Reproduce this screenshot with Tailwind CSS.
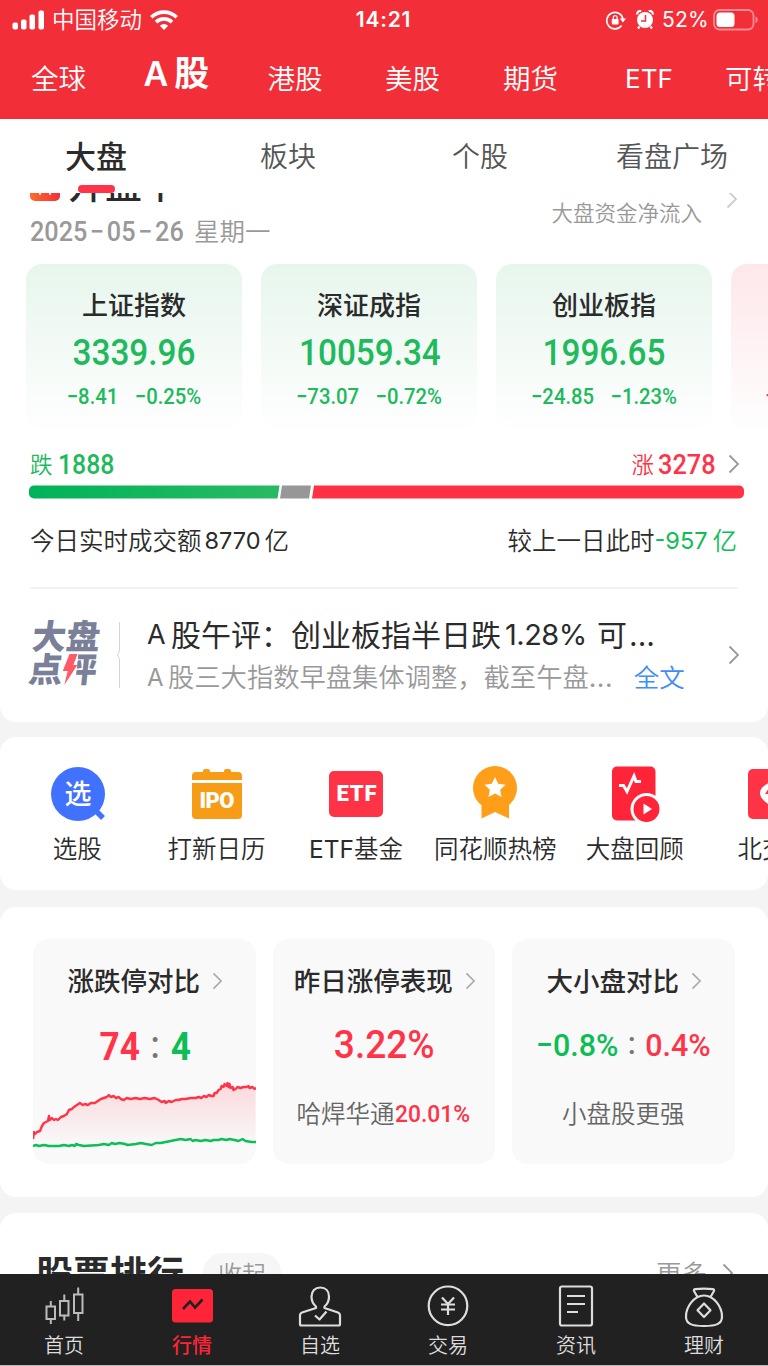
<!DOCTYPE html>
<html lang="zh-CN">
<head>
  <meta charset="UTF-8">
  <meta name="viewport" content="width=device-width, initial-scale=1.0">
  <title>A股行情</title>
  <script src="https://cdn.jsdelivr.net/npm/@tailwindcss/browser@4"></script>
</head>
<body class="w-[768px] h-[1366px] flex flex-col overflow-hidden bg-[#f4f4f4] text-[#2b2b2b] whitespace-nowrap font-['Inter','Noto_Sans_CJK_SC',sans-serif]">

  <svg class="hidden">
    <symbol id="chevron" viewBox="0 0 12 20"><path d="M1.5 1.5 10 10l-8.5 8.5" fill="none" stroke="currentColor" stroke-width="1.8"/></symbol>
  </svg>

  <!-- Header -->
  <header class="h-[119px] shrink-0 overflow-hidden bg-[#f22f38] text-white">
    <div class="h-10 grid grid-cols-3 items-center pl-3 pr-[9px]">
      <div class="flex items-center">
        <svg class="w-8 h-5" viewBox="0 0 32 20" fill="#fff">
          <rect x="0.5" y="12.5" width="5.5" height="7" rx="1.8"/>
          <rect x="9" y="9.5" width="5.5" height="10" rx="1.8"/>
          <rect x="17.5" y="4.5" width="5.5" height="15" rx="1.8"/>
          <rect x="26.5" y="0.5" width="5.5" height="19" rx="1.8"/>
        </svg>
        <span class="ml-2 text-[22.5px] leading-8 font-[350]">中国移动</span>
        <svg class="ml-2 w-7 h-5" viewBox="0 0 28 20" fill="none" stroke="#fff" stroke-width="3.6">
          <path d="M1.3 7.3a18.2 18.2 0 0 1 25.4 0"/>
          <path d="M6 12.1a11.5 11.5 0 0 1 16 0"/>
          <path d="M14 20l-4.2-4.3a6 6 0 0 1 8.4 0z" fill="#fff" stroke="none"/>
        </svg>
      </div>
      <div class="-ml-1 text-center text-[21px] leading-8 font-semibold tracking-[0.8px]">14:21</div>
      <div class="flex items-center justify-end">
        <svg class="w-5 h-5" viewBox="0 0 20 20" fill="none" stroke="#fff" stroke-width="1.6">
          <path d="M15.6 15.5A8.2 8.2 0 1 1 17 9"/>
          <path d="M13.8 8.5h6.2l-3.1 4z" fill="#fff" stroke="none"/>
          <rect x="5.8" y="9" width="6.8" height="5.4" rx=".8" fill="#fff" stroke="none"/>
          <path d="M7.3 9.5V7.600a1.900 1.900 0 0 1 3.800 0v1.900" stroke-width="1.2"/>
        </svg>
        <svg class="ml-2.5 w-[18px] h-5" viewBox="0 0 18 20">
          <circle cx="9" cy="10" r="8" fill="#fff"/>
          <path d="M1.200 4.500a3 3 0 0 1 4-3.300M16.800 4.500a3 3 0 0 0-4-3.300M3.500 16.500l-1.500 2M14.500 16.500l1.500 2" fill="none" stroke="#fff" stroke-width="2.2"/>
          <path d="M9.500 5v6H5" fill="none" stroke="#f22f38" stroke-width="1.5"/>
        </svg>
        <span class="ml-2 w-[47px] text-[21px] leading-8 tracking-[0.2px]">52%</span>
        <svg class="ml-1 w-[46px] h-[22px]" viewBox="0 0 46 22">
          <rect x="1" y="1" width="39.5" height="19.5" rx="5.5" fill="none" stroke="#fff" stroke-opacity=".45" stroke-width="1.8"/>
          <rect x="3.5" y="3.5" width="18" height="14.5" rx="3.5" fill="#fff"/>
          <path d="M42.5 7.500c3 1 3 5.500 0 6.500z" fill="#fff" fill-opacity=".45"/>
        </svg>
      </div>
    </div>
    <nav class="flex pt-[19px] text-[27.5px] leading-10 font-[350] text-center">
      <a class="w-[117px] shrink-0">全球</a>
      <a class="w-[119px] shrink-0 -mt-[6px] text-[35px] font-semibold"><span class="text-[34px]">A</span><span class="ml-1.5">股</span></a>
      <a class="w-[118px] shrink-0">港股</a>
      <a class="w-[117px] shrink-0">美股</a>
      <a class="w-[119px] shrink-0">期货</a>
      <a class="w-[118px] shrink-0 text-[26px] font-normal">ETF</a>
      <a class="w-[60px] shrink-0 overflow-hidden pl-[17px] text-left">可转债</a>
    </nav>
  </header>

  <!-- Sub tabs -->
  <nav class="h-[74px] shrink-0 grid grid-cols-4 bg-white pt-[18px] text-center text-[28px] leading-10 font-[350] text-[#555]">
    <a class="flex flex-col items-center text-[31px] font-medium text-[#2b2b2b]">大盘<span class="mt-[8px] w-[37px] h-2 rounded-full bg-[#ff3448]"></span></a>
    <a>板块</a>
    <a>个股</a>
    <a>看盘广场</a>
  </nav>

  <main class="h-[1081px] shrink-0 overflow-hidden">
    <!-- Market overview -->
    <section class="h-[529px] overflow-hidden bg-white rounded-b-2xl">
      <div class="-mt-7 h-20 flex justify-between pl-[30px] pr-[30px]">
        <div>
          <div class="flex h-10 pt-px text-[37px] leading-10 font-medium">
            <svg class="mt-[5px] w-[30px] h-[30px]" viewBox="0 0 30 30">
              <defs><linearGradient id="flame" x1="0" x2="1"><stop stop-color="#ff6a2b"/><stop offset="1" stop-color="#f22f38"/></linearGradient></defs>
              <rect width="30" height="30" rx="5" fill="url(#flame)"/>
              <path d="M10 12v12M20 12v12" stroke="#fff" stroke-width="1.5"/>
            </svg>
            <span class="ml-[8px]">开盘中</span>
          </div>
          <div class="mt-3 flex h-7 leading-7 text-[#999]">
            <span class="flex w-[164px] origin-left text-[28px] leading-[30px] font-medium font-['Roboto'] scale-x-[.9]">2025<span class="mx-[3px]">−</span>05<span class="mx-[3px]">−</span>26</span>
            <span class="text-[25.5px] leading-[30px] font-[350]">星期一</span>
          </div>
        </div>
        <div class="flex text-[#999]">
          <span class="pt-[34px] text-[21.5px] leading-7 font-[350]">大盘资金净流入</span>
          <svg class="ml-6 mt-[24px] w-3 h-5 text-[#ccc]"><use href="#chevron"/></svg>
        </div>
      </div>

      <div class="mt-[19px] pl-[26px] flex gap-[19px] overflow-hidden text-center text-[#20ba5d] font-['Roboto','Noto_Sans_CJK_SC',sans-serif]">
        <div class="w-[216px] h-[165px] shrink-0 rounded-2xl bg-linear-to-b from-[#e7f6ed] to-[#fefefe] pt-[26px]">
          <h3 class="text-[26px] leading-8 font-medium text-[#2b2b2b]">上证指数</h3>
          <p class="mt-[11px] text-[37px] leading-10 font-medium scale-x-90">3339.96</p>
          <p class="mt-3 flex justify-center gap-[18px] text-[22px] leading-6 font-medium scale-x-[.92]"><span>−8.41</span><span>−0.25%</span></p>
        </div>
        <div class="w-[216px] h-[165px] shrink-0 rounded-2xl bg-linear-to-b from-[#e7f6ed] to-[#fefefe] pt-[26px]">
          <h3 class="text-[26px] leading-8 font-medium text-[#2b2b2b]">深证成指</h3>
          <p class="mt-[11px] pl-0.5 text-[37px] leading-10 font-medium scale-x-90">10059.34</p>
          <p class="mt-3 flex justify-center gap-[18px] text-[22px] leading-6 font-medium scale-x-[.92]"><span>−73.07</span><span>−0.72%</span></p>
        </div>
        <div class="w-[216px] h-[165px] shrink-0 rounded-2xl bg-linear-to-b from-[#e7f6ed] to-[#fefefe] pt-[26px]">
          <h3 class="text-[26px] leading-8 font-medium text-[#2b2b2b]">创业板指</h3>
          <p class="mt-[11px] text-[37px] leading-10 font-medium scale-x-90">1996.65</p>
          <p class="mt-3 flex justify-center gap-[18px] text-[22px] leading-6 font-medium scale-x-[.92]"><span>−24.85</span><span>−1.23%</span></p>
        </div>
        <div class="w-[37px] h-[165px] shrink-0 overflow-hidden rounded-l-2xl bg-linear-to-b from-[#fee7ea] to-[#fefefe] pt-[120px] pl-[34px] text-left text-[22px] leading-6 font-medium text-[#ff3448]">−</div>
      </div>

      <div class="mt-5 h-[30px] flex items-center pl-[30px] pr-[28px] leading-[30px]">
        <span class="pt-px text-[22.5px] font-[350] text-[#20ba5d]">跌</span>
        <span class="ml-[5px] pt-[2px] inline-block origin-left text-[27.5px] font-medium font-['Roboto'] text-[#20ba5d] scale-x-[.9]">1888</span>
        <span class="ml-auto pt-px text-[22.5px] font-[350] text-[#ff3448]">涨</span>
        <span class="ml-1 pt-[2px] inline-block w-[70px] origin-left text-[27.5px] font-medium font-['Roboto'] text-[#ff3448] scale-x-[.92]">3278</span>
        <svg class="w-3 h-5 text-[#999]"><use href="#chevron"/></svg>
      </div>

      <svg class="mt-[6px] ml-[29px] w-[715px] h-[14px]" viewBox="0 0 715 14">
        <defs><linearGradient id="fall"><stop stop-color="#00b359"/><stop offset="1" stop-color="#28ba62"/></linearGradient></defs>
        <path d="M5 .5H250.500L248.500 13.500H5a5 5 0 0 1-5-5v-3a5 5 0 0 1 5-5z" fill="url(#fall)"/>
        <path d="M253 .5h29l-2 13h-29z" fill="#979797"/>
        <path d="M285 .5H710a5 5 0 0 1 5 5v3a5 5 0 0 1-5 5H283z" fill="#ff3142"/>
      </svg>

      <div class="mt-[27px] h-[30px] flex pl-[30px] pr-[31px] text-[24.5px] leading-[30px] font-[350]">
        <span>今日实时成交额</span>
        <span class="ml-[3px] w-[60px] text-[23.5px] font-normal">8770</span>
        <span>亿</span>
        <span class="ml-auto">较上一日此时</span>
        <span class="w-[58px] text-[23.5px] font-normal text-[#0dbd55]">-957</span>
        <span class="text-[#0dbd55]">亿</span>
      </div>
      <div class="mt-[31px] mx-[30px] h-[2px] bg-[#f2f2f2]"></div>

      <!-- Commentary -->
      <div class="mt-[25px] flex pl-[30px] pr-[28px]">
        <div class="relative w-[71px] mt-[6px] text-[34px] leading-[33px] font-black text-[#7a8097] -skew-x-6">
          <div>大盘</div>
          <div>点评</div>
          <svg class="absolute left-[34px] top-[32px] w-[14px] h-[34px]" viewBox="0 0 14 34"><path d="M0 0h14v34H0z" fill="#fff"/><path d="M5 2h8l-3 11h4L3 33l2-14H0z" fill="#ff5a68"/></svg>
        </div>
        <svg class="ml-[16px] mt-2 w-[4px] h-[66px]" viewBox="0 0 4 66"><path d="M2.5 0v29l-2 4 2 4v29" fill="none" stroke="#d5d5d5"/></svg>
        <div class="ml-[26px] leading-10">
          <div class="flex pt-px text-[30px]"><span class="w-[24px] text-[27px]">A</span><span>股午评：创业板指半日跌</span><span class="ml-1 w-[92px] text-[29px] tracking-[-0.5px]">1.28%</span><span>可</span><span class="ml-0.5">...</span></div>
          <div class="mt-[3px] flex text-[26.3px] font-[350] text-[#999]"><span class="w-[21px] text-[24px] font-normal">A</span><span>股三大指数早盘集体调整，截至午盘</span><span class="w-[45px] font-normal tracking-[0.5px]">...</span><span class="text-[25.5px] text-[#3f8dfa]">全文</span></div>
        </div>
        <svg class="ml-auto mt-[31px] w-3 h-5 text-[#999]"><use href="#chevron"/></svg>
      </div>
    </section>

    <!-- Shortcuts -->
    <section class="mt-[15px] h-[153px] rounded-2xl bg-white overflow-hidden flex pt-[29px] pl-[7.5px] text-[24.5px] leading-8 font-[350]">
      <div class="w-[139.4px] shrink-0 flex flex-col items-center">
        <svg class="ml-px w-14 h-14" viewBox="0 0 56 56">
          <circle cx="28" cy="28" r="27" fill="#4071ff"/>
          <path d="M44 43l9 9" stroke="#4071ff" stroke-width="5.5"/>
          <text x="28" y="38" text-anchor="middle" font-size="27" font-weight="500" fill="#fff">选</text>
        </svg>
        <span class="mt-[11px]">选股</span>
      </div>
      <div class="w-[139.4px] shrink-0 flex flex-col items-center">
        <svg class="w-14 h-14" viewBox="0 0 56 56" fill="#f79c17">
          <path d="M3 14V10a4 4 0 0 1 4-4h7V5a2 2 0 0 1 2-2h3a2 2 0 0 1 2 2v1h14V5a2 2 0 0 1 2-2h3a2 2 0 0 1 2 2v1h7a4 4 0 0 1 4 4v4z"/>
          <path d="M3 17h50v32a4 4 0 0 1-4 4H7a4 4 0 0 1-4-4z"/>
          <text x="28" y="42" text-anchor="middle" textLength="35" lengthAdjust="spacing" font-family="Roboto" font-size="22" font-weight="900" fill="#fff">IPO</text>
        </svg>
        <span class="mt-[11px]">打新日历</span>
      </div>
      <div class="w-[139.4px] shrink-0 flex flex-col items-center">
        <svg class="w-14 h-14" viewBox="0 0 56 56">
          <rect x="1" y="5" width="54" height="46" rx="5" fill="#ff3346"/>
          <text x="28.5" y="35" text-anchor="middle" textLength="40" lengthAdjust="spacing" font-family="Roboto" font-size="22" font-weight="900" fill="#fff">ETF</text>
        </svg>
        <span class="mt-[11px]"><span class="font-normal">ETF</span>基金</span>
      </div>
      <div class="w-[139.4px] shrink-0 flex flex-col items-center">
        <svg class="w-14 h-14" viewBox="0 0 56 56" fill="#ff9f19">
          <circle cx="28" cy="22" r="22"/>
          <path d="M14.5 36h27.500v16.500L28 46l-13.500 6.500z"/>
          <path d="M28 11l3.200 6.700 7.300 1-5.300 5.100 1.300 7.200L28 27.500l-6.500 3.500 1.300-7.200-5.300-5.100 7.300-1z" fill="#fff"/>
        </svg>
        <span class="mt-[11px]">同花顺热榜</span>
      </div>
      <div class="w-[139.4px] shrink-0 flex flex-col items-center">
        <svg class="w-14 h-14" viewBox="0 0 56 56">
          <rect x="5" y="0.5" width="43.5" height="54" rx="5" fill="#ff2437"/>
          <path d="M12 19.500h4.500l3.500 6 7-15.500 2 5.500h5" fill="none" stroke="#fff" stroke-width="3"/>
          <circle cx="39.5" cy="43" r="16" fill="#fff"/>
          <circle cx="39.5" cy="43" r="13" fill="#ff2437"/>
          <path d="M36.5 37.500v11l8.500-5.500z" fill="#fff"/>
        </svg>
        <span class="mt-[11px]">大盘回顾</span>
      </div>
      <div class="w-[64px] shrink-0 overflow-hidden pl-[33px]">
        <svg class="ml-[8px] w-14 h-14" viewBox="0 0 56 56">
          <rect x="3" y="3" width="50" height="50" rx="5" fill="#ff3346"/>
          <path d="M28 15Q15 20 15 27T28 41 41 27 28 15z" fill="#fff"/>
          <path d="M20 28h8l-4-6z" fill="#ff3346"/>
        </svg>
        <span class="mt-[11px] block">北交所</span>
      </div>
    </section>

    <!-- Market stats -->
    <section class="mt-[17px] h-[290px] rounded-2xl bg-white flex gap-[17px] pt-8 pl-[33px] text-center">
      <div class="w-[222.5px] h-[225px] rounded-2xl bg-[#f9f9f9] overflow-hidden pt-[26px]">
        <h3 class="flex items-center justify-center pl-0.5 text-[26.5px] leading-8 font-medium">涨跌停对比<svg class="ml-3 w-[11px] h-[18px] text-[#aaa]"><use href="#chevron"/></svg></h3>
        <p class="mt-[30px] pl-0.5 text-[39px] leading-10 font-bold font-['Roboto'] flex justify-center scale-x-90"><span class="text-[#ff3448]">74</span><span class="mx-3 font-medium leading-9 text-[#777]">:</span><span class="text-[#0dbd55]">4</span></p>
        <svg class="mt-[15px] w-full h-[70px]" viewBox="0 0 223 70" preserveAspectRatio="none" fill="none">
          <defs><linearGradient id="rise" x1="0" y1="0" x2="0" y2="1"><stop stop-color="#ff3448" stop-opacity=".16"/><stop offset="1" stop-color="#ff3448" stop-opacity="0"/></linearGradient></defs>
          <path d="M0 59V54L5 50 10 42 16 38 23 37 30 34 38 26 46 22 55 22 65 19 77 14 90 17 120 17 132 19 150 16 170 14 184 10 196 3 207 5 223 4V64H0z" fill="url(#rise)"/>
          <path d="M0 57l1-7 1 2 2-2 3-1 2-5 2-3 2-1 2-1 1-5 1 4 2-2 2 2 2-1 2 1 3-3 3-1 3-2 2-4 3-1 2-2 3-2 3-2 3 2 2-1 3 1 3-2 4 0 3-2 3-2 3-1 3-1 2-2 2 2 3-1 2 2 3-1 2 2 3 1 3-2 4 1 5-1 4 1 5-1 5 1 5-1 4 2 3 2 3-1 1 2 3-2 3 1 4-2 3 0 3-1 4 0 5-1 5 0 3-1 3 1 2-2 3 1 2-2 3 1 2 0 1-3 2 0 2-3 2-1 1-3 2 1 1-3 2 2 1-3 1 4 1-3 1 4 2-1 1 3 2-1 2-2 3 1 3-1 3 0 2-1 1 2 3-1 2 2 2-1" stroke="#ff3448" stroke-width="2.4" stroke-linejoin="round"/>
          <path d="M0 64l3-1 3 1 5-1 5 1 10 0 5-1 5 1 3-1 3 1 1-2 3 1 5 1 15-1 5-1 5 1 3-2 3 1 5-1 5 1 3 1 8-1 5-1 5 1 6 1 4-2 5 0 5-1 5-1 5-1 5-1 5 1 5-1 2 2 3-1 5 1 5-1 5 1 3-1 5 0 3-1 5 1 3-1 5 1 4 1 4-2 3 2 6 1 5 0" stroke="#0dbd55" stroke-width="2.4" stroke-linejoin="round"/>
        </svg>
      </div>
      <div class="w-[222.5px] h-[225px] rounded-2xl bg-[#f9f9f9] pt-[26px]">
        <h3 class="flex items-center justify-center pl-0.5 text-[26.5px] leading-8 font-medium">昨日涨停表现<svg class="ml-3 w-[11px] h-[18px] text-[#aaa]"><use href="#chevron"/></svg></h3>
        <p class="mt-[28px] text-[39px] leading-10 font-medium font-['Roboto'] text-[#ff3448] scale-x-[.95]">3.22%</p>
        <p class="mt-[33px] flex pl-6 text-[24.5px] leading-8 font-[350] text-[#666]">哈焊华通<span class="inline-block origin-left font-['Roboto'] font-medium text-[#ff3448] scale-x-[.93]">20.01%</span></p>
      </div>
      <div class="w-[222.5px] h-[225px] rounded-2xl bg-[#f9f9f9] pt-[26px]">
        <h3 class="flex items-center justify-center pl-0.5 text-[26.5px] leading-8 font-medium">大小盘对比<svg class="ml-3 w-[11px] h-[18px] text-[#aaa]"><use href="#chevron"/></svg></h3>
        <p class="mt-[28px] text-[32px] leading-10 font-medium font-['Roboto'] flex justify-center scale-x-[.95]"><span class="text-[#0dbd55]">−0.8%</span><span class="mx-2.5 leading-9 text-[#777]">:</span><span class="text-[#ff3448]">0.4%</span></p>
        <p class="mt-[33px] text-[24.5px] leading-8 font-[350] text-[#666]">小盘股更强</p>
      </div>
    </section>

    <!-- Ranking -->
    <section class="mt-4 h-[100px] rounded-t-2xl bg-white flex pt-10 pl-9 pr-[34px]">
      <h2 class="pt-0.5 text-[37px] leading-10 font-bold">股票排行</h2>
      <span class="ml-[19px] w-[78px] h-10 rounded-full bg-[#f6f6f6] pt-0.5 text-center text-[24px] leading-10 font-[350] text-[#999]">收起</span>
      <span class="ml-auto pt-px text-[25.5px] leading-10 font-[350] text-[#999]">更多</span>
      <svg class="ml-[15px] mt-2.5 w-3 h-5 text-[#999]"><use href="#chevron"/></svg>
    </section>
  </main>

  <!-- Tab bar -->
  <nav class="h-[92px] shrink-0 grid grid-cols-6 bg-[#212121] border-b border-[#bbb] pt-[10px] text-center text-[20px] leading-7 font-[350] text-[#ddd]">
    <a class="flex flex-col items-center">
      <svg class="w-11 h-11" viewBox="0 0 44 44" fill="none" stroke="#bbb" stroke-width="2">
        <path d="M4.500 22.500H13V35H4.500zM8.800 17v5.500M8.800 35v5M18 17h8.500v14.500H18zM22.300 10.500V17M22.300 31.500v5M32 10.500h8.500V29H32zM36.200 3.500v7M36.200 29v8"/>
      </svg>
      <span class="mt-1">首页</span>
    </a>
    <a class="flex flex-col items-center font-medium text-[#ff2437]">
      <svg class="w-11 h-11" viewBox="0 0 44 44">
        <rect x="2" y="5" width="41" height="33.5" rx="3.5" fill="#ff2437"/>
        <path d="M13 25l7-7.500 5 6 7.500-8" fill="none" stroke="#212121" stroke-width="2.6"/>
      </svg>
      <span class="mt-1">行情</span>
    </a>
    <a class="flex flex-col items-center">
      <svg class="w-11 h-11" viewBox="0 0 44 44" fill="none" stroke="#ddd" stroke-width="2.2" stroke-linejoin="round">
        <path d="M18 22.500c-3-2.500-4.500-6-4.500-10 0-5.500 3.500-9 8.800-9s8.700 3.500 8.700 9c0 4-1.500 7.500-4.500 10v1.500L40 28.500q2 .8 2 2.500v9q0 1.500-1.500 1.500h-37Q2 41.500 2 40v-9q0-1.700 2-2.500L18 24z"/>
        <path d="M17 31.500l4.500 4 7-8"/>
      </svg>
      <span class="mt-1">自选</span>
    </a>
    <a class="flex flex-col items-center">
      <svg class="w-11 h-11" viewBox="0 0 44 44" fill="none" stroke="#ddd" stroke-width="2.2">
        <circle cx="22" cy="21.8" r="19.3"/>
        <path d="M16 13.500l6 6.500 6-6.500M22 20v11M15 20.500h14M15 25.500h14"/>
      </svg>
      <span class="mt-1">交易</span>
    </a>
    <a class="flex flex-col items-center">
      <svg class="w-11 h-11" viewBox="0 0 44 44" fill="none" stroke="#ddd" stroke-width="2.2">
        <rect x="6" y="2.5" width="32" height="39" rx="2"/>
        <path d="M13 12h18M13 20h18M13 28h11"/>
      </svg>
      <span class="mt-1">资讯</span>
    </a>
    <a class="flex flex-col items-center">
      <svg class="w-11 h-11" viewBox="0 0 44 44" fill="none" stroke="#ddd" stroke-width="2.2" stroke-linejoin="round">
        <path d="M15.500 13L12 7q-.5-1.500 1-1.800 9-1.200 18 0 1.500.3 1 1.800L28.500 13"/>
        <path d="M22 11.500c10 0 18 11.500 18 21 0 7-5 9.500-18 9.500S4 39.500 4 32.500c0-9.500 8-21 18-21z"/>
        <path d="M22 19.500l6.500 6.800-6.500 6.700-6.500-6.700z"/>
      </svg>
      <span class="mt-1">理财</span>
    </a>
  </nav>

</body>
</html>
